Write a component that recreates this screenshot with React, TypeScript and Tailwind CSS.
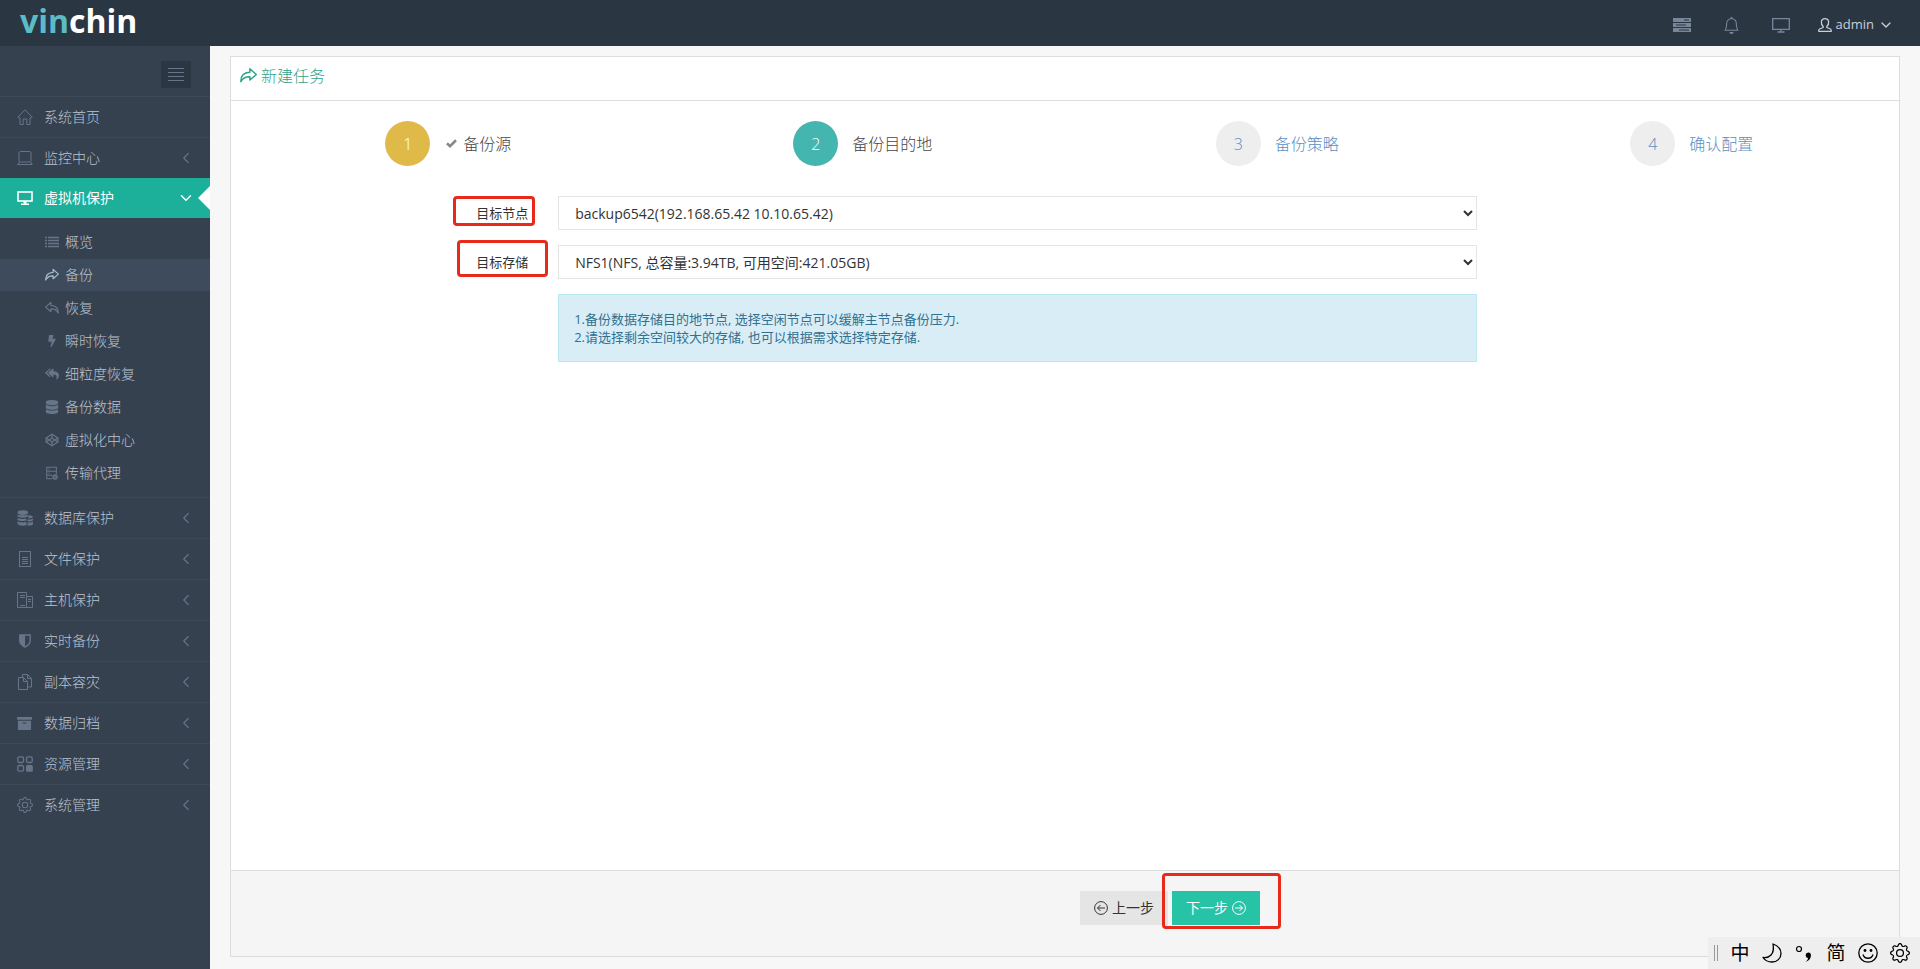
import { useState } from "react";
import type { ReactNode } from "react";
import { BsBell, BsGear } from "react-icons/bs";
import { FaArchive, FaBolt, FaDatabase, FaReplyAll } from "react-icons/fa";
import { FiCodepen } from "react-icons/fi";
import { ChevronDown, ChevronLeft } from "lucide-react";

const Svg = ({ children, size = 16 }: { children: ReactNode; size?: number }) => (
  <svg width={size} height={size} viewBox="0 0 16 16" fill="none" stroke="currentColor" aria-hidden="true">
    {children}
  </svg>
);

const HomeIcon = () => (
  <Svg>
    <path d="M.7 8.2 8 .8l7.3 7.4-.9.6H13v6.7H9.800V10H6.200v5.500H3V8.800H1.600z" strokeLinejoin="round" />
  </Svg>
);

const LaptopIcon = () => (
  <Svg>
    <rect x="2" y="1.5" width="12" height="10.5" rx="1.5" />
    <path d="M2.5 12 .7 14.5h14.6L13.5 12" strokeLinejoin="round" />
  </Svg>
);

const ScreenIcon = () => (
  <Svg>
    <rect x="1" y="2" width="14" height="9" strokeWidth="1.6" />
    <path d="M8 11v3M4 14.3h8" strokeWidth="1.6" />
    <path d="M6.5 12.5h3" strokeWidth="2" />
  </Svg>
);

const DatabasesIcon = () => (
  <Svg>
    <g fill="currentColor" stroke="none">
      <ellipse cx="5.8" cy="2.6" rx="5.3" ry="2.4" />
      <path d="M.5 4.4c1 1.3 9.6 1.3 10.6 0v1.8c-1 1.9-9.6 1.9-10.6 0zM.5 7.7c1 1.3 7 1.5 9 .8v2c-2.4.8-8 .5-9-.8zM.5 11.2c1 1.3 7 1.5 9 .8v3c-2.4 1.2-8 .8-9-1.2z" />
      <path d="M11.5 5.2c2 0 4 .6 4.5 1.5-.3 1-2.3 1.7-4.5 1.7zM10.5 9.4c2 .3 4.500 0 5.500-.9v1.700c-1 1.200-3.500 1.400-5.500 1zM10.500 12.400c2 .3 4.500 0 5.500-.9v2.700c-1 1.400-3.500 1.600-5.500 1.200z" />
    </g>
  </Svg>
);

const FileIcon = () => (
  <Svg>
    <rect x="2.5" y=".5" width="11" height="15" />
    <path d="M5 6.5h6M5 8.5h6M5 10.5h6M5 12.5h6" />
  </Svg>
);

const HostIcon = () => (
  <Svg>
    <path d="M9.5 15.5h-9V.5h9v3.500M9.500 4.500h6v11h-6zM3 3.500h5M3 5.500h5M3 13.500h5M11 7.500h3M11 9.500h3" />
  </Svg>
);

const ShieldIcon = () => (
  <Svg>
    <path d="M2.8 2h10.4v6c0 3-2.5 4.7-5.2 6-2.7-1.3-5.2-3-5.2-6z" strokeWidth="1.4" />
    <path d="M2.8 2H8v12c-2.7-1.3-5.2-3-5.2-6z" fill="currentColor" stroke="none" />
  </Svg>
);

const CopyIcon = () => (
  <Svg>
    <path d="M1.5 3.5h5v4h4v8h-9zM6.5 3.5l4 4M5.5 3.5v-3h5l4 4v8.5h-4M10.5.5v4h4" />
  </Svg>
);

const BlocksIcon = () => (
  <Svg>
    <rect x=".8" y=".8" width="5.7" height="5.7" rx="1.5" strokeWidth="1.3" />
    <rect x="9.5" y=".8" width="5.7" height="5.7" rx="1.5" strokeWidth="1.3" />
    <rect x=".8" y="9.5" width="5.7" height="5.7" rx="1.5" strokeWidth="1.3" />
    <rect x="9" y="9" width="6.8" height="6.8" rx="1.5" fill="currentColor" stroke="none" />
  </Svg>
);

const AgentIcon = () => (
  <Svg size={14}>
    <path d="M8 14.5H2v-13h11v8M2 6h11M2 10.5h6M4 3.8h1.5M4 8.3h1.5" strokeWidth="1.2" />
    <circle cx="11.5" cy="12.5" r="2.3" strokeWidth="1.6" />
    <circle cx="11.5" cy="12.5" r=".6" />
  </Svg>
);

const ListIcon = () => (
  <svg width="14" height="12" viewBox="0 0 14 12" stroke="currentColor" strokeWidth="1.7" aria-hidden="true">
    <path d="M0 1.500h2M3 1.500h11M0 4.500h2M3 4.500h11M0 7.500h2M3 7.500h11M0 10.500h2M3 10.500h11" />
  </svg>
);

const ArrowIcon = ({ size = 14, flip = false }: { size?: number; flip?: boolean }) => (
  <svg
    className={flip ? "-scale-x-100" : ""}
    width={size}
    height={size}
    viewBox="0 0 16 16"
    fill="none"
    stroke="currentColor"
    strokeWidth="1.4"
    strokeLinejoin="round"
    aria-hidden="true"
  >
    <path d="M.8 13.800C.6 8.500 3.500 5 9.300 4.900V1.600L15.300 7l-6 5.200V9.100C5.500 8.900 2.800 10 .8 13.800z" />
  </svg>
);

const CheckIcon = () => (
  <svg className="ml-4 -mr-2" width="11" height="9" viewBox="0 0 11 9" fill="none" stroke="#888888" aria-hidden="true">
    <path d="M1 4.300l3 2.900L10 1.300" strokeWidth="2.600" />
  </svg>
);

const ServerIcon = () => (
  <svg width="18" height="14" viewBox="0 0 18 14" fill="currentColor" aria-hidden="true">
    <path d="M0 0h18v4H0zM0 5h18v4H0zM0 10h18v4H0z" />
    <path d="M11 2h5M3 7h10M6 12h10" stroke="#2b3643" />
  </svg>
);

const MonitorIcon = () => (
  <svg width="18" height="15" viewBox="0 0 18 15" fill="none" stroke="currentColor" aria-hidden="true">
    <path d="M.7.7h16.600v10.600H.7zM9 11.500V14M5.500 14h7" strokeWidth="1.300" />
  </svg>
);

const UserIcon = () => (
  <svg width="14" height="14" viewBox="0 0 14 14" fill="none" stroke="currentColor" aria-hidden="true">
    <path
      d="M5.2 8.5C3.800 7.200 3.200 5.500 3.400 3.800 3.600 1.700 5 .7 7 .7s3.400 1 3.600 3.100c.2 1.700-.4 3.400-1.800 4.700v1l3.700 1.500c.6.3.8.8.8 2.300H.7c0-1.500.2-2 .8-2.300l3.700-1.500z"
      strokeWidth="1.3"
      strokeLinejoin="round"
    />
  </svg>
);

const CircleArrow = ({ flip = false }: { flip?: boolean }) => (
  <svg
    className={flip ? "-scale-x-100" : ""}
    width="14"
    height="14"
    viewBox="0 0 14 14"
    fill="none"
    stroke="currentColor"
    aria-hidden="true"
  >
    <circle cx="7" cy="7" r="6.4" />
    <path d="M3 7h7.5M7.5 4l3 3-3 3" />
  </svg>
);

const topMenu = [
  { label: "系统首页", icon: <HomeIcon />, arrow: false },
  { label: "监控中心", icon: <LaptopIcon />, arrow: true },
];

const subMenu = [
  { label: "概览", icon: <ListIcon /> },
  { label: "备份", icon: <ArrowIcon />, current: true },
  { label: "恢复", icon: <ArrowIcon flip /> },
  { label: "瞬时恢复", icon: <FaBolt size={12} /> },
  { label: "细粒度恢复", icon: <FaReplyAll size={14} /> },
  { label: "备份数据", icon: <FaDatabase size={14} /> },
  { label: "虚拟化中心", icon: <FiCodepen size={14} /> },
  { label: "传输代理", icon: <AgentIcon /> },
];

const bottomMenu = [
  { label: "数据库保护", icon: <DatabasesIcon />, arrow: true },
  { label: "文件保护", icon: <FileIcon />, arrow: true },
  { label: "主机保护", icon: <HostIcon />, arrow: true },
  { label: "实时备份", icon: <ShieldIcon />, arrow: true },
  { label: "副本容灾", icon: <CopyIcon />, arrow: true },
  { label: "数据归档", icon: <FaArchive size={15} />, arrow: true },
  { label: "资源管理", icon: <BlocksIcon />, arrow: true },
  { label: "系统管理", icon: <BsGear size={16} />, arrow: true },
];

const steps = [
  { label: "备份源", circle: "bg-[#dfba49] text-white", text: "text-[#444444]", done: true },
  { label: "备份目的地", circle: "bg-[#45b6af] text-white", text: "text-[#444444]" },
  { label: "备份策略", circle: "bg-[#eeeeee] text-[#5b8fc4]", text: "text-[#5b8fc4]" },
  { label: "确认配置", circle: "bg-[#eeeeee] text-[#5b8fc4]", text: "text-[#5b8fc4]" },
];

const Header = () => (
  <header className="flex h-[46px] shrink-0 items-center justify-between bg-[#2b3643] pr-[26px] pl-5">
    <a href="#" className="pb-1 text-[32px] leading-10 font-bold text-white">
      <span className="text-[#5bbcc8]">vin</span>chin
    </a>
    <div className="flex items-center pt-1 text-[#79869a]">
      <button type="button" aria-label="任务" className="mr-8">
        <ServerIcon />
      </button>
      <button type="button" aria-label="通知" className="mr-8">
        <BsBell size={17} />
      </button>
      <button type="button" aria-label="大屏" className="mr-7">
        <MonitorIcon />
      </button>
      <button type="button" className="flex items-center gap-1 text-[13px] text-[#c6cfda]">
        <UserIcon />
        <span>admin</span>
        <ChevronDown size={16} />
      </button>
    </div>
  </header>
);

const MenuItem = ({ label, icon, arrow }: { label: string; icon: ReactNode; arrow: boolean }) => (
  <li className="border-t border-[#3d4957]">
    <a href="#" className="flex h-10 items-center pr-[15px] pl-[17px] text-[#bcc4d0]">
      <span className="flex w-[27px] items-center text-[#677588]">{icon}</span>
      <span className="grow">{label}</span>
      {arrow && <ChevronLeft size={18} strokeWidth={1.5} className="text-[#677588]" />}
    </a>
  </li>
);

const Sidebar = () => (
  <aside className="w-[210px] shrink-0 bg-[#364150] text-sm font-light">
    <div className="flex justify-end pt-[15px] pr-[19px] pb-2">
      <button
        type="button"
        aria-label="菜单"
        className="flex h-[27px] w-[30px] flex-col items-center justify-center gap-[3px] bg-[#2b3643]"
      >
        <span className="h-px w-4 bg-[#677588]" />
        <span className="h-px w-4 bg-[#677588]" />
        <span className="h-px w-4 bg-[#677588]" />
        <span className="h-px w-4 bg-[#677588]" />
      </button>
    </div>
    <ul>
      {topMenu.map((item) => (
        <MenuItem key={item.label} {...item} />
      ))}
      <li>
        <a href="#" className="relative flex h-10 items-center bg-[#1caf9a] pr-[15px] pl-[17px] font-normal text-white">
          <span className="flex w-[27px] items-center">
            <ScreenIcon />
          </span>
          <span className="grow">虚拟机保护</span>
          <ChevronDown size={18} />
          <span className="absolute top-2 right-0 border-y-12 border-r-12 border-y-transparent border-r-white" />
        </a>
        <ul className="pt-2 pb-[7px]">
          {subMenu.map((item) => (
            <li key={item.label} className="mb-px">
              <a
                href="#"
                className={`flex h-8 items-center pl-11 text-[#bcc4d0] ${item.current ? "bg-[#3e4b5c]" : ""}`}
              >
                <span
                  className={`flex w-4 items-center justify-center ${item.current ? "text-[#a7bdcd]" : "text-[#677588]"}`}
                >
                  {item.icon}
                </span>
                <span className="ml-[5px]">{item.label}</span>
              </a>
            </li>
          ))}
        </ul>
      </li>
      {bottomMenu.map((item) => (
        <MenuItem key={item.label} {...item} />
      ))}
    </ul>
  </aside>
);

const Steps = () => (
  <ol className="grid grid-cols-4 pt-5 pl-[10px] text-base font-light">
    {steps.map((step, i) => (
      <li key={step.label} className="flex items-center justify-center">
        <span className={`flex size-[45px] items-center justify-center rounded-full ${step.circle}`}>{i + 1}</span>
        {step.done && <CheckIcon />}
        <span className={`ml-[14px] ${step.text}`}>{step.label}</span>
      </li>
    ))}
  </ol>
);

const selectClass = "block h-[34px] w-full border border-[#e5e5e5] bg-white px-3 text-sm text-[#333333]";

const TargetForm = () => {
  const [node, setNode] = useState("backup6542");
  const [storage, setStorage] = useState("nfs1");

  return (
    <form className="grid grid-cols-12 gap-y-[15px] pt-[30px] pl-[41px] text-[13px] text-[#333333]">
      <div className="relative col-span-2 pr-[15px] text-right leading-[34px]">
        <label htmlFor="node">目标节点</label>
        <span className="pointer-events-none absolute top-0 right-2 h-[30px] w-[82px] rounded-sm border-3 border-[#e8291c]" />
      </div>
      <div className="col-span-7 px-[15px]">
        <select id="node" value={node} onChange={(e) => setNode(e.target.value)} className={selectClass}>
          <option value="backup6542">backup6542(192.168.65.42 10.10.65.42)</option>
        </select>
      </div>
      <div className="relative col-span-2 col-start-1 pr-[15px] text-right leading-[34px]">
        <label htmlFor="storage">目标存储</label>
        <span className="pointer-events-none absolute -top-[5px] -right-[5px] h-[37px] w-[91px] rounded-sm border-3 border-[#e8291c]" />
      </div>
      <div className="col-span-7 px-[15px]">
        <select id="storage" value={storage} onChange={(e) => setStorage(e.target.value)} className={selectClass}>
          <option value="nfs1">NFS1(NFS, 总容量:3.94TB, 可用空间:421.05GB)</option>
        </select>
      </div>
      <div className="col-span-7 col-start-3 px-[15px]">
        <div className="border border-[#bce8f1] bg-[#d9edf7] p-[15px] leading-[18px] text-[#31708f]">
          <p>1.备份数据存储目的地节点, 选择空闲节点可以缓解主节点备份压力.</p>
          <p>2.请选择剩余空间较大的存储, 也可以根据需求选择特定存储.</p>
        </div>
      </div>
    </form>
  );
};

const InputBar = () => (
  <div className="fixed right-0 bottom-0 flex h-8 items-center gap-3 bg-[#eeeeee] pr-[10px] pl-[6px] text-black">
    <span className="h-4 w-1 border-x border-[#999999]" />
    <span className="w-5 text-center text-[19px] leading-8">中</span>
    <svg width="20" height="20" viewBox="0 0 20 20" fill="none" stroke="currentColor" strokeWidth="1.3">
      <path d="M11 1c4 1.5 8 4.5 8 9.5C19 15.5 15 19 10 19c-4 0-7-1.5-9-4.5 6 1 12-3 10-13.5z" strokeLinejoin="round" />
    </svg>
    <svg width="20" height="20" viewBox="0 0 20 20">
      <circle cx="5" cy="6" r="2.5" fill="none" stroke="currentColor" strokeWidth="1.2" />
      <path d="M11 19c2-1 3-2.5 3-4a2.7 2.7 0 1 1 3-3c0 3.5-2 6-6 7z" fill="currentColor" />
    </svg>
    <span className="w-5 text-center text-[19px] leading-8">简</span>
    <svg width="20" height="20" viewBox="0 0 20 20" fill="none" stroke="currentColor" strokeWidth="1.3">
      <circle cx="10" cy="10" r="9.2" />
      <path d="M5 11.5c1.5 5 8.5 5 10 0" />
      <circle cx="7" cy="7.5" r=".8" fill="currentColor" />
      <circle cx="13" cy="7.5" r=".8" fill="currentColor" />
    </svg>
    <BsGear size={20} />
  </div>
);

const App = () => (
  <div className="flex min-h-screen flex-col bg-[#f7f7f7] font-['Open_Sans','Noto_Sans_CJK_SC',sans-serif]">
    <Header />
    <div className="flex grow">
      <Sidebar />
      <main className="flex grow flex-col px-5 pt-[10px] pb-3">
        <section className="flex grow flex-col border border-[#dddddd] bg-white">
          <h1 className="flex h-11 items-center gap-1 border-b border-[#dddddd] px-[9px] pb-[6px] text-base font-light text-[#2fa28b]">
            <ArrowIcon size={17} />
            新建任务
          </h1>
          <div className="grow">
            <Steps />
            <TargetForm />
          </div>
          <footer className="flex gap-1 border-t border-[#dddddd] bg-[#f5f5f5] pt-5 pb-[31px] text-sm">
            <button
              type="button"
              className="ml-[calc(50%+15px)] flex h-[34px] items-center gap-1 bg-[#e5e5e5] px-[14px] text-[#333333]"
            >
              <CircleArrow flip />
              上一步
            </button>
            <div className="relative">
              <button type="button" className="flex h-[34px] items-center gap-1 bg-[#26c3a6] px-[14px] text-white">
                下一步
                <CircleArrow />
              </button>
              <span className="pointer-events-none absolute -top-[18px] -left-[10px] h-14 w-[119px] rounded-sm border-3 border-[#e8291c]" />
            </div>
          </footer>
        </section>
      </main>
    </div>
    <InputBar />
  </div>
);

export default App;
